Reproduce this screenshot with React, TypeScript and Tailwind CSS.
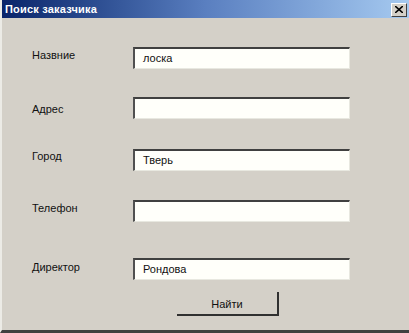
const FIELDS = [
  { label: "Назвние", value: "лоска", top: "mt-[29px]", labelShift: "-mt-[6px]" },
  { label: "Адрес", value: "", top: "mt-[28px]", labelShift: "mt-[2px]" },
  { label: "Город", value: "Тверь", top: "mt-[30px]", labelShift: "-mt-[8px]" },
  { label: "Телефон", value: "", top: "mt-[29px]", labelShift: "-mt-[5px]" },
  { label: "Директор", value: "Рондова", top: "mt-[36px]", labelShift: "-mt-[4px]" },
];

function CloseButton() {
  return (
    <div className="flex h-[14px] w-[16px] items-center justify-center border border-t-white border-l-white border-r-[#404040] border-b-[#404040] bg-[#d4d0c8]">
      <svg width="8" height="7" viewBox="0 0 8 7">
        <path d="M0 0 L8 7 M8 0 L0 7" stroke="#000" strokeWidth="1.6" />
      </svg>
    </div>
  );
}

function Field({ label, value, top, labelShift }: (typeof FIELDS)[number]) {
  return (
    <div className={`flex items-center ${top}`}>
      <span className={`w-[131px] shrink-0 pl-[30px] text-[11px] text-[#111] ${labelShift}`}>{label}</span>
      <div className="h-[22px] w-[217px] border-t-2 border-l-2 border-t-[#404040] border-l-[#505050] border-b border-r border-b-[#e8e8e0] border-r-[#e8e8e0] bg-[#fffffa] pl-[8px] text-[11px] leading-[19px] text-[#111]">
        {value}
      </div>
    </div>
  );
}

export default function App() {
  return (
    <div
      className="flex h-[333px] w-[409px] flex-col border-b-[3px] border-b-[#404040] border-l-2 border-l-[#ecebe6] bg-[#d4d0c8]"
      style={{ fontFamily: '"Liberation Sans", Arial, sans-serif' }}
    >
      <div className="flex h-[18px] items-center justify-between bg-gradient-to-r from-[#0a246a] via-[#5a7fc0] to-[#a6caf0] pl-[3px] pr-[2px] pt-[1px]">
        <span className="text-[11px] font-bold tracking-[0.2px] text-white">Поиск заказчика</span>
        <CloseButton />
      </div>
      <div className="flex-1">
        {FIELDS.map((f) => (
          <Field key={f.label} {...f} />
        ))}
        <div className="mt-[12px] flex pl-[175px]">
          <div className="flex h-[24px] w-[102px] items-end justify-center border-r-2 border-b-2 border-r-[#303030] border-b-[#303030] pb-[2px] text-[11px] text-[#111]">
            Найти
          </div>
        </div>
      </div>
    </div>
  );
}
